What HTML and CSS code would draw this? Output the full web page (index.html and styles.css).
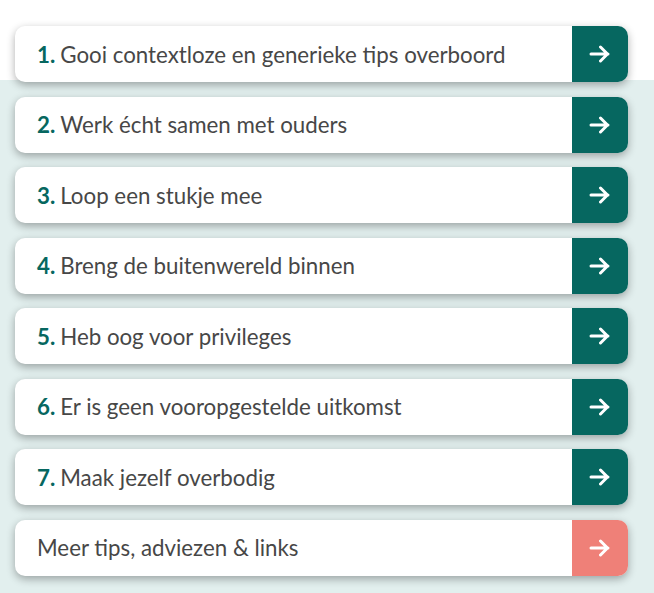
FILE: index.html
```html
<!DOCTYPE html>
<html lang="nl">
<head>
    <meta charset="UTF-8">
    <meta name="viewport" content="width=device-width, initial-scale=1.0">
    <title>Tips</title>
    <link rel="stylesheet" href="styles.css">
</head>
<body>
    <div class="tips">
        <a class="tip" href="#"><span class="tip-text"><b>1.</b> Gooi contextloze en generieke tips overboord</span><span class="tip-arrow"><svg width="22" height="18" viewBox="0 0 22 18"><path d="M2 9h17M11.5 2l7 7-7 7" fill="none" stroke="#fff" stroke-width="3" stroke-linecap="round" stroke-linejoin="round"/></svg></span></a>
        <a class="tip" href="#"><span class="tip-text"><b>2.</b> Werk écht samen met ouders</span><span class="tip-arrow"><svg width="22" height="18" viewBox="0 0 22 18"><path d="M2 9h17M11.5 2l7 7-7 7" fill="none" stroke="#fff" stroke-width="3" stroke-linecap="round" stroke-linejoin="round"/></svg></span></a>
        <a class="tip" href="#"><span class="tip-text"><b>3.</b> Loop een stukje mee</span><span class="tip-arrow"><svg width="22" height="18" viewBox="0 0 22 18"><path d="M2 9h17M11.5 2l7 7-7 7" fill="none" stroke="#fff" stroke-width="3" stroke-linecap="round" stroke-linejoin="round"/></svg></span></a>
        <a class="tip" href="#"><span class="tip-text"><b>4.</b> Breng de buitenwereld binnen</span><span class="tip-arrow"><svg width="22" height="18" viewBox="0 0 22 18"><path d="M2 9h17M11.5 2l7 7-7 7" fill="none" stroke="#fff" stroke-width="3" stroke-linecap="round" stroke-linejoin="round"/></svg></span></a>
        <a class="tip" href="#"><span class="tip-text"><b>5.</b> Heb oog voor privileges</span><span class="tip-arrow"><svg width="22" height="18" viewBox="0 0 22 18"><path d="M2 9h17M11.5 2l7 7-7 7" fill="none" stroke="#fff" stroke-width="3" stroke-linecap="round" stroke-linejoin="round"/></svg></span></a>
        <a class="tip" href="#"><span class="tip-text"><b>6.</b> Er is geen vooropgestelde uitkomst</span><span class="tip-arrow"><svg width="22" height="18" viewBox="0 0 22 18"><path d="M2 9h17M11.5 2l7 7-7 7" fill="none" stroke="#fff" stroke-width="3" stroke-linecap="round" stroke-linejoin="round"/></svg></span></a>
        <a class="tip" href="#"><span class="tip-text"><b>7.</b> Maak jezelf overbodig</span><span class="tip-arrow"><svg width="22" height="18" viewBox="0 0 22 18"><path d="M2 9h17M11.5 2l7 7-7 7" fill="none" stroke="#fff" stroke-width="3" stroke-linecap="round" stroke-linejoin="round"/></svg></span></a>
        <a class="tip tip-more" href="#"><span class="tip-text">Meer tips, adviezen &amp; links</span><span class="tip-arrow"><svg width="22" height="18" viewBox="0 0 22 18"><path d="M2 9h17M11.5 2l7 7-7 7" fill="none" stroke="#fff" stroke-width="3" stroke-linecap="round" stroke-linejoin="round"/></svg></span></a>
    </div>
</body>
</html>
```

FILE: styles.css
```css
body, html {
    margin: 0;
    padding: 0;
    height: 100%;
    font-family: Lato, "Open Sans", sans-serif;
}

body {
    background: linear-gradient(to bottom, #ffffff 80px, #e2efee 80px);
}

.tips {
    display: flex;
    flex-direction: column;
    gap: 14.5px;
    padding: 26px 26px 0 15px;
}

.tip {
    display: flex;
    height: 56px;
    background: #ffffff;
    border-radius: 10px;
    overflow: hidden;
    text-decoration: none;
    box-shadow: 0 3px 8px rgba(0, 0, 0, 0.32);
}

.tip-text {
    flex: 1;
    display: flex;
    align-items: center;
    padding-left: 22px;
    font-size: 22.3px;
    color: #474747;
}

.tip-text b {
    color: #066760;
    font-weight: 700;
    margin-right: 5px;
}

.tip-arrow {
    width: 56px;
    display: flex;
    align-items: center;
    justify-content: center;
    background: #066760;
}

.tip-more .tip-arrow {
    background: #ef8078;
}
```
